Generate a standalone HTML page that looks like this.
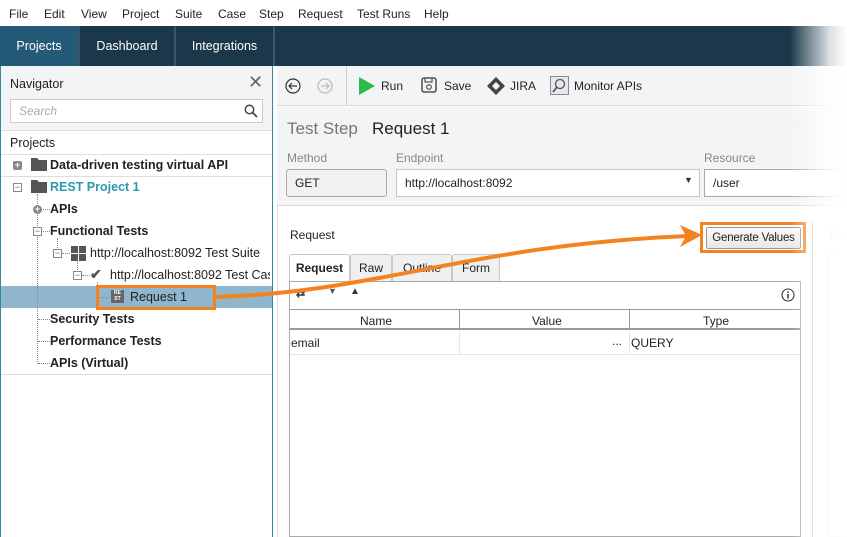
<!DOCTYPE html>
<html><head><style>
*{box-sizing:border-box;margin:0;padding:0}
body{width:847px;height:537px;overflow:hidden;position:relative;font-family:"Liberation Sans",sans-serif;font-size:12px;color:#222;background:#fff}
.a{position:absolute}
.menu span{position:absolute;top:7px;font-size:12px}
.tab{position:absolute;top:26px;height:40px;color:#fff;font-size:12.5px;line-height:40px;text-align:center}
.tr{position:absolute;font-size:12.5px;font-weight:bold;color:#222}
.dot{position:absolute;border-top:1px dotted #888}
.vdot{position:absolute;border-left:1px dotted #888}
.lbl{color:#888;font-size:12px}
.box{position:absolute;border:1px solid #c5c8cb;background:#fff;height:28px;line-height:26px;padding-left:8px;font-size:12px}
.rt{position:absolute;top:254px;height:28px;border:1px solid #c8c8c8;border-bottom:none;background:#eef0f2;line-height:27px;text-align:center;font-size:12px;border-radius:3px 3px 0 0}
.pm{position:absolute;width:9px;height:9px;border:1px solid #888;background:#fff;font-size:9px;line-height:7px;text-align:center;color:#666}
.pf{position:absolute;width:9px;height:9px;background:#888;border-radius:2px;color:#fff;font-size:9px;line-height:9px;text-align:center;font-weight:bold}
</style></head><body>
<div class="menu">
<span style="left:9px">File</span><span style="left:44px">Edit</span><span style="left:81px">View</span><span style="left:122px">Project</span><span style="left:175px">Suite</span><span style="left:218px">Case</span><span style="left:259px">Step</span><span style="left:298px">Request</span><span style="left:357px">Test Runs</span><span style="left:424px">Help</span>
</div>
<div class="a" style="left:0;top:26px;width:847px;height:40px;background:#1b384a"></div>
<div class="tab" style="left:0;width:78px;background:#245a78">Projects</div>
<div class="a" style="left:78px;top:26px;width:2px;height:40px;background:#3a5566"></div>
<div class="tab" style="left:80px;width:94px">Dashboard</div>
<div class="a" style="left:174px;top:26px;width:2px;height:40px;background:#3a5566"></div>
<div class="tab" style="left:176px;width:97px">Integrations</div>
<div class="a" style="left:273px;top:26px;width:2px;height:40px;background:#3a5566"></div>

<!-- left panel -->
<div class="a" style="left:0;top:66px;width:273px;height:471px;background:#fff;border:1px solid #2f8a9c;border-top:none;border-bottom:none"></div>
<div class="a" style="left:1px;top:66px;width:271px;height:65px;background:#f3f4f5;border-bottom:1px solid #ddd"></div>
<div class="a" style="left:10px;top:77px;font-size:12.5px">Navigator</div>
<div class="a" style="left:248px;top:72px;font-size:18px;color:#666">✕</div>
<div class="a" style="left:10px;top:99px;width:253px;height:24px;border:1px solid #ccc;background:#fff"></div>
<div class="a" style="left:19px;top:104px;color:#aaa;font-style:italic;font-size:12px">Search</div>
<svg class="a" style="left:244px;top:104px" width="14" height="14"><circle cx="5.5" cy="5.5" r="4.2" fill="none" stroke="#444" stroke-width="1.5"/><line x1="8.5" y1="8.5" x2="13" y2="13" stroke="#444" stroke-width="1.8"/></svg>
<div class="a" style="left:10px;top:136px;font-size:12.5px">Projects</div>
<div class="a" style="left:1px;top:154px;width:271px;height:1px;background:#ddd"></div>
<div class="a" style="left:1px;top:176px;width:271px;height:1px;background:#ddd"></div>
<div class="a" style="left:1px;top:374px;width:271px;height:1px;background:#ddd"></div>
<div class="a" style="left:1px;top:286px;width:271px;height:22px;background:#8fb6cc"></div>

<div class="pf" style="left:13px;top:161px">+</div>
<div class="pm" style="left:13px;top:183px">−</div>
<svg class="a" style="left:31px;top:157px" width="16" height="14"><path d="M0 1h6l2 2h8v11H0Z" fill="#555"/></svg>
<svg class="a" style="left:31px;top:179px" width="16" height="14"><path d="M0 1h6l2 2h8v11H0Z" fill="#555"/></svg>
<div class="tr" style="left:50px;top:158px">Data-driven testing virtual API</div>
<div class="tr" style="left:50px;top:180px;color:#2a9ab0">REST Project 1</div>
<div class="vdot" style="left:37px;top:194px;height:170px"></div>
<div class="dot" style="left:38px;top:209px;width:12px"></div>
<div class="dot" style="left:38px;top:231px;width:12px"></div>
<div class="dot" style="left:38px;top:319px;width:12px"></div>
<div class="dot" style="left:38px;top:341px;width:12px"></div>
<div class="dot" style="left:38px;top:363px;width:12px"></div>
<div class="pf" style="left:33px;top:205px;border-radius:50%">+</div>
<div class="pm" style="left:33px;top:227px">−</div>
<div class="tr" style="left:50px;top:202px">APIs</div>
<div class="tr" style="left:50px;top:224px">Functional Tests</div>
<div class="tr" style="left:50px;top:312px">Security Tests</div>
<div class="tr" style="left:50px;top:334px">Performance Tests</div>
<div class="tr" style="left:50px;top:356px">APIs (Virtual)</div>
<div class="vdot" style="left:57px;top:238px;height:10px"></div>
<div class="pm" style="left:53px;top:249px">−</div>
<div class="dot" style="left:62px;top:253px;width:8px"></div>
<svg class="a" style="left:71px;top:246px" width="15" height="15"><rect x="0" y="0" width="7" height="7" fill="#555"/><rect x="8" y="0" width="7" height="7" fill="#555"/><rect x="0" y="8" width="7" height="7" fill="#555"/><rect x="8" y="8" width="7" height="7" fill="#555"/></svg>
<div class="a" style="left:90px;top:246px;font-size:12.5px">http://localhost:8092 Test Suite</div>
<div class="vdot" style="left:77px;top:260px;height:10px"></div>
<div class="pm" style="left:73px;top:271px">−</div>
<div class="dot" style="left:82px;top:275px;width:8px"></div>
<div class="a" style="left:90px;top:266px;font-size:14px;color:#555;font-weight:bold">✔</div>
<div class="a" style="left:110px;top:268px;font-size:12.5px;white-space:nowrap;width:160px;overflow:hidden">http://localhost:8092 Test Case</div>
<div class="vdot" style="left:97px;top:282px;height:15px"></div>
<div class="dot" style="left:98px;top:297px;width:12px"></div>
<div class="a" style="left:111px;top:290px;width:13px;height:13px;background:#666;color:#fff;font-size:5px;line-height:6px;text-align:center;font-weight:bold">RE<br>ST</div>
<div class="a" style="left:130px;top:290px;font-size:12.5px">Request 1</div>
<div class="a" style="left:96px;top:285px;width:120px;height:25px;border:3px solid #f58220"></div>

<!-- right panel -->
<div class="a" style="left:277px;top:66px;width:570px;height:40px;background:#f3f4f5;border-bottom:1px solid #d8d8d8"></div>
<div class="a" style="left:346px;top:66px;width:1px;height:40px;background:#ccc"></div>
<svg class="a" style="left:285px;top:78px" width="16" height="16"><circle cx="8" cy="8" r="7" fill="none" stroke="#333" stroke-width="1.2"/><path d="M12 8H4M7 5L4 8l3 3" fill="none" stroke="#333" stroke-width="1.2"/></svg>
<svg class="a" style="left:317px;top:78px" width="16" height="16"><circle cx="8" cy="8" r="7" fill="none" stroke="#bbb" stroke-width="1.2"/><path d="M4 8h8M9 5l3 3-3 3" fill="none" stroke="#bbb" stroke-width="1.2"/></svg>
<svg class="a" style="left:359px;top:77px" width="16" height="18"><path d="M0 0L16 9L0 18Z" fill="#2db84b"/></svg>
<div class="a" style="left:381px;top:79px">Run</div>
<svg class="a" style="left:421px;top:77px" width="16" height="16"><rect x="1" y="1" width="14" height="14" rx="2" fill="none" stroke="#333" stroke-width="1.3"/><rect x="4" y="1" width="7" height="4" fill="none" stroke="#333"/><circle cx="8" cy="10" r="2.3" fill="none" stroke="#333"/></svg>
<div class="a" style="left:444px;top:79px">Save</div>
<svg class="a" style="left:486px;top:76px" width="20" height="20"><path d="M10 1L19 10L10 19L1 10Z" fill="#444"/><path d="M10 6L14 10L10 14L6 10Z" fill="#f3f4f5"/></svg>
<div class="a" style="left:510px;top:79px">JIRA</div>
<svg class="a" style="left:550px;top:76px" width="19" height="19"><rect x="0.5" y="0.5" width="18" height="18" fill="#e6e8ea" stroke="#889"/><circle cx="10" cy="8" r="4.5" fill="none" stroke="#555" stroke-width="1.3"/><line x1="7" y1="11" x2="3" y2="16" stroke="#555" stroke-width="1.8"/></svg>
<div class="a" style="left:574px;top:79px">Monitor APIs</div>

<div class="a" style="left:277px;top:107px;width:570px;height:99px;background:#f3f4f5;border-bottom:1px solid #d8d8d8"></div>
<div class="a" style="left:287px;top:119px;font-size:17px;color:#777">Test Step</div>
<div class="a" style="left:372px;top:119px;font-size:17px;color:#222">Request 1</div>
<div class="a lbl" style="left:287px;top:151px">Method</div>
<div class="a lbl" style="left:396px;top:151px">Endpoint</div>
<div class="a lbl" style="left:704px;top:151px">Resource</div>
<div class="box" style="left:286px;top:169px;width:101px;background:#f0f1f2;border-color:#aaa;border-radius:3px">GET</div>
<div class="box" style="left:396px;top:169px;width:304px">http://localhost:8092</div>
<div class="a" style="left:684px;top:175px;font-size:9px;color:#333">▼</div>
<div class="box" style="left:704px;top:169px;width:143px;border-color:#aaa">/user</div>

<div class="a" style="left:277px;top:206px;width:1px;height:331px;background:#ddd"></div>
<div class="a" style="left:290px;top:228px">Request</div>
<div class="a" style="left:700px;top:222px;width:106px;height:31px;border:3px solid #f58220"></div>
<div class="a" style="left:706px;top:227px;width:95px;height:22px;border:1px solid #999;border-radius:2px;background:linear-gradient(#fafafa,#e8e8e8);line-height:20px;text-align:center;font-size:11.5px;letter-spacing:-0.2px">Generate Values</div>
<div class="a" style="left:812px;top:222px;width:1px;height:315px;background:#ccc"></div>
<div class="a" style="left:830px;top:227px;color:#ccc">Re</div>
<div class="a" style="left:828px;top:254px;width:19px;height:283px;border:1px solid #e0e0e0"></div>

<div class="rt" style="left:289px;width:61px;background:#fff;font-weight:bold;height:29px">Request</div>
<div class="rt" style="left:350px;width:42px">Raw</div>
<div class="rt" style="left:392px;width:60px">Outline</div>
<div class="rt" style="left:452px;width:48px">Form</div>
<div class="a" style="left:289px;top:281px;width:512px;height:256px;border:1px solid #aaa;background:#fff"></div>
<div class="a" style="left:296px;top:287px;font-size:11px;font-weight:bold;color:#333">⇄</div>
<div class="a" style="left:328px;top:286px;font-size:9px;color:#555">▼</div>
<div class="a" style="left:350px;top:286px;font-size:10px;color:#333">▲</div>
<svg class="a" style="left:781px;top:288px" width="14" height="14"><circle cx="7" cy="7" r="6" fill="none" stroke="#333" stroke-width="1.1"/><rect x="6.3" y="6" width="1.5" height="4.5" fill="#333"/><rect x="6.3" y="3.3" width="1.5" height="1.5" fill="#333"/></svg>
<div class="a" style="left:290px;top:309px;width:510px;height:21px;border-top:1px solid #999;border-bottom:2px solid #999;background:#fff"></div>
<div class="a" style="left:459px;top:309px;width:1px;height:21px;background:#999"></div>
<div class="a" style="left:629px;top:309px;width:1px;height:21px;background:#999"></div>
<div class="a" style="left:360px;top:314px">Name</div>
<div class="a" style="left:532px;top:314px">Value</div>
<div class="a" style="left:703px;top:314px">Type</div>
<div class="a" style="left:459px;top:331px;width:1px;height:23px;background:#e6e6e6"></div>
<div class="a" style="left:629px;top:331px;width:1px;height:23px;background:#e6e6e6"></div>
<div class="a" style="left:290px;top:354px;width:510px;height:1px;background:#e6e6e6"></div>
<div class="a" style="left:291px;top:336px">email</div>
<div class="a" style="left:612px;top:334px">...</div>
<div class="a" style="left:631px;top:336px">QUERY</div>

<svg class="a" style="left:0;top:0" width="847" height="537"><path d="M216 297C380 292 470 245 688 236" fill="none" stroke="#f58220" stroke-width="4"/><path d="M702 235L680 225L686 236L680 247Z" fill="#f58220"/></svg>

<div class="a" style="left:790px;top:0;width:57px;height:537px;background:linear-gradient(90deg,rgba(255,255,255,0),rgba(255,255,255,0.85) 70%,#fff)"></div>
</body></html>
